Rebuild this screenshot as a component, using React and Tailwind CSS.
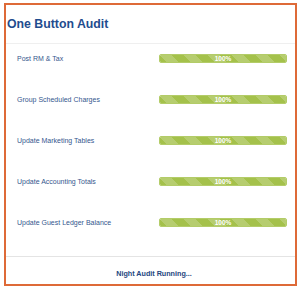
// Night audit progress card: five steps, each with a striped progress bar.

const STEPS = [
  "Post RM & Tax",
  "Group Scheduled Charges",
  "Update Marketing Tables",
  "Update Accounting Totals",
  "Update Guest Ledger Balance",
];

const stripes = {
  backgroundColor: "#a4c14b",
  backgroundImage:
    "linear-gradient(45deg, rgba(255,255,255,.2) 25%, transparent 25%, transparent 50%, rgba(255,255,255,.2) 50%, rgba(255,255,255,.2) 75%, transparent 75%, transparent)",
  backgroundSize: "24px 24px",
};

export default function App() {
  return (
    <div className="h-[289px] w-[302px] bg-white pl-[4px] pt-[3px] font-['Liberation_Sans',Arial,sans-serif]">
      <div className="flex h-[283px] w-[293px] flex-col border-2 border-[#de6a38] bg-white">
        {/* Header */}
        <div className="flex h-[39px] items-center border-b border-[#efefef] pl-[1px]">
          <h1 className="text-[12.3px] font-bold leading-none text-[#1f4c8e]">
            One Button Audit
          </h1>
        </div>

        {/* Steps */}
        <div className="flex flex-col gap-[32px] pl-[11px] pr-[8px] pt-[10px]">
          {STEPS.map((s) => (
            <div key={s} className="flex h-[9px] items-center justify-between">
              <span className="text-[7px] leading-none text-[#35578e]">{s}</span>
              <ProgressBar value={100} />
            </div>
          ))}
        </div>

        <div className="flex-1" />

        {/* Footer */}
        <div className="flex h-[28px] items-center justify-center border-t border-[#e4e4e4] pl-[7px] pt-[6px]">
          <span className="text-[7.2px] font-bold leading-none text-[#24467e]">
            Night Audit Running...
          </span>
        </div>
      </div>
    </div>
  );
}

function ProgressBar({ value }) {
  return (
    <div className="h-[9px] w-[128px] overflow-hidden rounded-[2px] border border-[#b3cc68] bg-[#eef3dc]">
      <div
        className="flex h-full items-center justify-center"
        style={{ ...stripes, width: `${value}%` }}
      >
        <span className="pt-[1px] text-[6.5px] font-bold leading-none text-white">{value}%</span>
      </div>
    </div>
  );
}
